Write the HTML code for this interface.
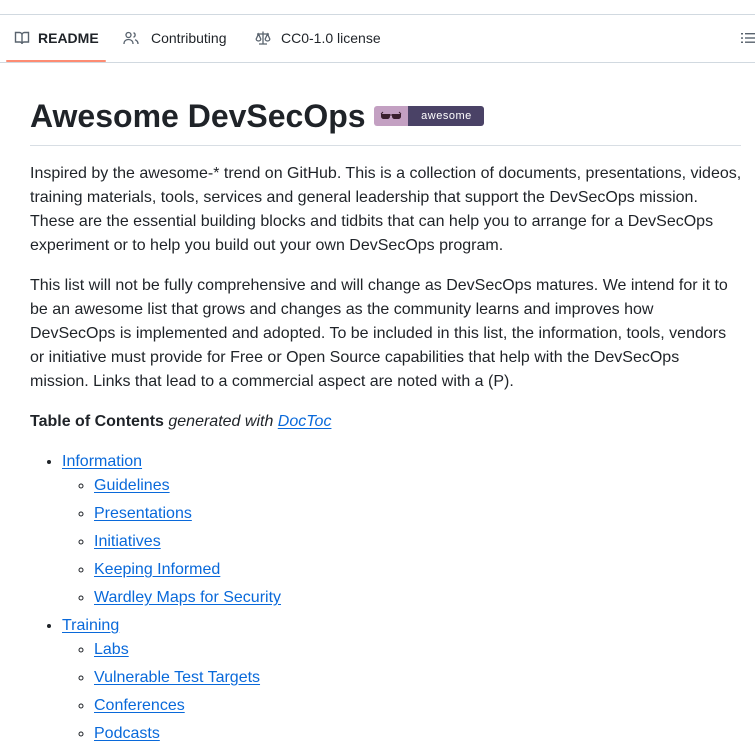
<!DOCTYPE html>
<html><head><meta charset="utf-8"><style>
*{box-sizing:border-box}
body{margin:0;background:#fff;font-family:"Liberation Sans",sans-serif;color:#1f2328;width:755px;height:732px;overflow:hidden;position:relative}
.bar{position:absolute;left:0;top:14px;width:760px;height:49px;border-top:1px solid #d1d9e0;border-bottom:1px solid #d1d9e0}
.tab{position:absolute;top:-1px;height:47px;display:flex;align-items:center;font-size:14px;color:#1f2328}
.tab svg{margin-right:8px}
.ul{position:absolute;left:6px;top:45px;width:100px;height:2px;background:#fd8c73;border-radius:2px}
.md{position:absolute;left:30px;top:96px;width:711px;font-size:16px;line-height:24px}
h1{margin:0 0 16px;font-size:32px;line-height:40px;font-weight:600;padding-bottom:9px;border-bottom:1px solid #d8dee4;display:block}
p{margin:0 0 16px}
a{color:#0969da;text-decoration:underline;text-underline-offset:2px}
ul{margin:0;padding-left:32px}
li+li{margin-top:4px}
ul ul{list-style:circle}
.badge{display:inline-flex;vertical-align:middle;height:20px;border-radius:3px;overflow:hidden;position:relative;top:-3px;margin-left:0}
</style></head><body>
<div class="bar">
 <div class="tab" style="left:14px;font-weight:700">
  <svg width="16" height="16" viewBox="0 0 16 16" fill="none" stroke="#59636e" stroke-width="1.4"><path d="M1.5 2.5h4a2.5 2.5 0 0 1 2.5 2.5v9a2 2 0 0 0-2-2h-4.5z M14.5 2.5h-4a2.5 2.5 0 0 0-2.5 2.5v9a2 2 0 0 1 2-2h4.5z"/></svg>README</div>
 <div class="tab" style="left:123px">
  <svg width="16" height="16" viewBox="0 0 16 16" fill="none" stroke="#59636e" stroke-width="1.3"><circle cx="5.5" cy="5" r="2.5"/><path d="M1 14c0-3 2-4.5 4.5-4.5S10 11 10 14"/><path d="M10.5 2.8a2.3 2.3 0 0 1 0 4.4M12 9.8c1.8.6 3 2 3 4.2"/></svg><span style="margin-left:4px">Contributing</span></div>
 <div class="tab" style="left:255px">
  <svg width="16" height="16" viewBox="0 0 16 16" fill="none" stroke="#59636e" stroke-width="1.3"><path d="M8 1.5v12M4 14h8M2 4h12M3.5 4l-2.3 5a2.3 2 0 0 0 4.6 0zM12.5 4l-2.3 5a2.3 2 0 0 0 4.6 0z"/></svg><span style="margin-left:2px">CC0-1.0 license</span></div>
 <div class="tab" style="left:740px">
  <svg width="16" height="16" viewBox="0 0 16 16" fill="#59636e"><rect x="1" y="3" width="2" height="1.5"/><rect x="1" y="7.3" width="2" height="1.5"/><rect x="1" y="11.5" width="2" height="1.5"/><rect x="5" y="3" width="11" height="1.4"/><rect x="5" y="7.3" width="11" height="1.4"/><rect x="5" y="11.5" width="11" height="1.4"/></svg></div>
 <div class="ul"></div>
</div>
<div class="md">
<h1>Awesome DevSecOps <span class="badge"><span style="width:34px;background:#c3a0c2;display:flex;align-items:center;justify-content:center"><svg width="22" height="10" viewBox="0 0 22 10"><path d="M1 3h9v2c0 2-1 3-3 3H4C2 8 1 7 1 5zM12 3h9v2c0 2-1 3-3 3h-3c-2 0-3-1-3-3z" fill="#3a1f2e"/><path d="M1 3L3 1M21 3L19 1M10 4h2" stroke="#3a1f2e" stroke-width="1"/></svg></span><span style="width:76px;background:#4a4266;color:#fff;font-size:11px;line-height:20px;text-align:center;font-weight:400;letter-spacing:.5px">awesome</span></span></h1>
<p style="white-space:nowrap">Inspired by the awesome-* trend on GitHub. This is a collection of documents, presentations, videos,<br>training materials, tools, services and general leadership that support the DevSecOps mission.<br>These are the essential building blocks and tidbits that can help you to arrange for a DevSecOps<br>experiment or to help you build out your own DevSecOps program.</p>
<p>This list will not be fully comprehensive and will change as DevSecOps matures. We intend for it to be an awesome list that grows and changes as the community learns and improves how DevSecOps is implemented and adopted. To be included in this list, the information, tools, vendors or initiative must provide for Free or Open Source capabilities that help with the DevSecOps mission. Links that lead to a commercial aspect are noted with a (P).</p>
<p><b>Table of Contents</b> <i>generated with <a>DocToc</a></i></p>
<ul>
<li><a>Information</a><ul><li><a>Guidelines</a></li><li><a>Presentations</a></li><li><a>Initiatives</a></li><li><a>Keeping Informed</a></li><li><a>Wardley Maps for Security</a></li></ul></li>
<li><a>Training</a><ul><li><a>Labs</a></li><li><a>Vulnerable Test Targets</a></li><li><a>Conferences</a></li><li><a>Podcasts</a></li></ul></li>
</ul>
</div>
</body></html>
